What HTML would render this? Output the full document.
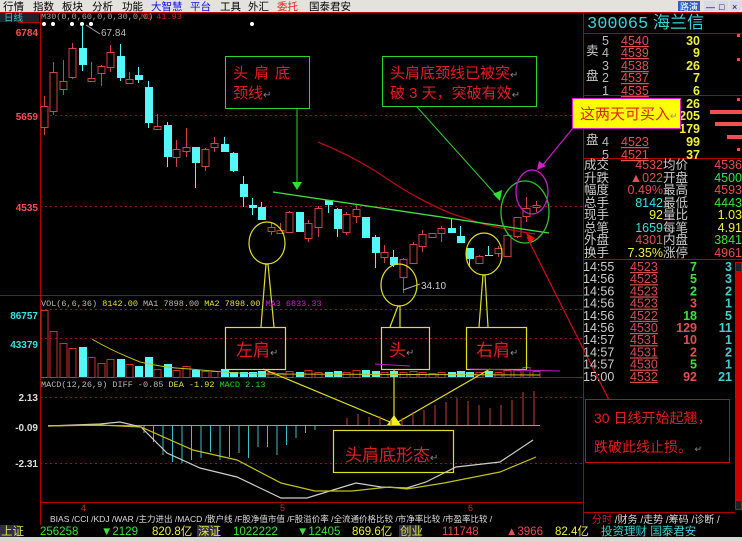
<!DOCTYPE html>
<html><head><meta charset="utf-8">
<style>
html,body{margin:0;padding:0;background:#000;width:742px;height:541px;overflow:hidden}
svg{display:block}
text{font-family:"Liberation Sans","WenQuanYi Zen Hei","Noto Sans CJK SC",sans-serif}
.m{font-family:"Liberation Mono","WenQuanYi Zen Hei",monospace}
</style></head><body>
<svg id="s" width="742" height="541" viewBox="0 0 742 541" xmlns="http://www.w3.org/2000/svg">
<rect width="742" height="541" fill="#000"/>
<rect x="0" y="0" width="742" height="12" fill="#e4e2dc"/>
<g font-size="10.5" fill="#000">
<text x="3" y="10">行情</text><text x="33" y="10">指数</text><text x="62" y="10">板块</text><text x="92" y="10">分析</text><text x="122" y="10">功能</text>
<text x="151" y="10" fill="#1010e0">大智慧</text><text x="190" y="10" fill="#1010e0">平台</text><text x="220" y="10">工具</text><text x="248" y="10">外汇</text>
<text x="277" y="10" fill="#e02020">委托</text><text x="309" y="10">国泰君安</text>
</g>
<rect x="678" y="1" width="22" height="10" fill="#3060c0"/><text x="680" y="10" font-size="9" fill="#fff">路演</text>
<rect x="704" y="1" width="11" height="10" fill="#d8d8e8"/><rect x="717" y="1" width="11" height="10" fill="#d8d8e8"/><rect x="730" y="1" width="11" height="10" fill="#d8d8e8"/>
<text x="706" y="10" font-size="9" fill="#003">—</text><text x="719" y="10" font-size="9" fill="#003">□</text><text x="732" y="10" font-size="9" fill="#003">×</text>
<rect x="0" y="12" width="742" height="1" fill="#c00"/>
<rect x="0" y="13" width="39" height="9" fill="#202030"/>
<text x="4" y="21" font-size="9.5" fill="#40c0c0">日线</text>
<text x="41" y="19" font-size="8.5" fill="#aaa" class="m">M30(0,0,60,0,0,30,0,0)</text>
<text x="141" y="19" font-size="8.5" fill="#e02020" class="m">M6 41.93</text>
<g fill="#fff"><circle cx="44" cy="24" r="2"/><circle cx="53" cy="24" r="2"/><circle cx="72" cy="24" r="2"/><circle cx="82" cy="24" r="2"/><circle cx="91" cy="24" r="2"/><circle cx="252" cy="24" r="2"/></g>
<g stroke="#b00000" stroke-width="1">
<line x1="40.5" y1="13" x2="40.5" y2="525"/>
<line x1="583.5" y1="13" x2="583.5" y2="525"/>
<line x1="0" y1="295.5" x2="583" y2="295.5"/>
<line x1="40" y1="377.5" x2="583" y2="377.5"/>
<line x1="40" y1="502.5" x2="583" y2="502.5"/>
<line x1="18" y1="22.5" x2="40" y2="22.5"/>
</g>
<g stroke="#8a1a1a" stroke-dasharray="2,3">
<line x1="40" y1="115.5" x2="583" y2="115.5"/><line x1="40" y1="206.5" x2="583" y2="206.5"/>
<line x1="40" y1="309.5" x2="583" y2="309.5"/><line x1="40" y1="338.5" x2="583" y2="338.5"/>
<line x1="40" y1="397.5" x2="583" y2="397.5"/><line x1="40" y1="463.5" x2="583" y2="463.5"/>
</g>
<g font-size="10" font-weight="bold" text-anchor="end" class="m">
<text x="38" y="36" fill="#ff5050">6784</text>
<text x="38" y="120" fill="#ff5050">5659</text>
<text x="38" y="211" fill="#ff5050">4535</text>
<text x="38" y="319" fill="#40e0e0">86757</text>
<text x="38" y="348" fill="#40e0e0">43379</text>
<text x="38" y="401" fill="#ddd">2.13</text>
<text x="38" y="431" fill="#ddd">-0.09</text>
<text x="38" y="467" fill="#ddd">-2.31</text>
</g>
<line x1="86" y1="25" x2="100" y2="34" stroke="#aaa"/>
<text x="101" y="36" font-size="10" fill="#bbb">67.84</text>
<g id="candles"></g>
<path d="M318 142 Q350 155 377 172 Q400 188 417 197 Q435 207 450 213 Q470 220 487 225 Q510 230 535 234" stroke="#b01010" stroke-width="1.3" fill="none"/>
<line x1="273" y1="192" x2="549" y2="233" stroke="#40e040" stroke-width="1.3"/>
<line x1="403" y1="290" x2="420" y2="284" stroke="#aaa"/>
<text x="421" y="289" font-size="10" fill="#ccc">34.10</text>
<rect x="225.5" y="56.5" width="84" height="52" fill="none" stroke="#30d030"/>
<text x="233" y="78" font-size="15" fill="#e02020" letter-spacing="6">头肩底</text>
<text x="233" y="98" font-size="15" fill="#e02020">颈线<tspan fill="#888" font-size="10">↵</tspan></text>
<line x1="297" y1="108" x2="297" y2="182" stroke="#30d030"/>
<polygon points="292,182 302,182 297,190" fill="#30e030"/>
<rect x="382.5" y="56.5" width="154" height="50" fill="none" stroke="#30d030"/>
<text x="390" y="78" font-size="15" fill="#e02020">头肩底颈线已被突<tspan fill="#888" font-size="10">↵</tspan></text>
<text x="390" y="98" font-size="15" fill="#e02020">破 3 天，突破有效<tspan fill="#888" font-size="10">↵</tspan></text>
<line x1="417" y1="107" x2="497" y2="196" stroke="#30d030"/>
<polygon points="493,194 500,201 502,190" fill="#30e030"/>
<ellipse cx="525" cy="212" rx="24" ry="31" fill="none" stroke="#30c030" stroke-width="1.3"/>
<ellipse cx="532" cy="192" rx="16" ry="22" fill="none" stroke="#c020c0" stroke-width="1.3"/>
<line x1="573" y1="128" x2="542" y2="166" stroke="#c020c0" stroke-width="1.3"/>
<polygon points="537,170 539,161 546,166" fill="#d020d0"/>
<line x1="527" y1="237" x2="609" y2="400" stroke="#d01010" stroke-width="1.2"/>
<polygon points="526,233 530,243 535,238" fill="#f01010"/>
<g stroke="#e0e020" fill="none" stroke-width="1.2">
<ellipse cx="267" cy="243" rx="18" ry="21"/>
<ellipse cx="399" cy="285" rx="18" ry="21"/>
<ellipse cx="484" cy="254" rx="18" ry="21"/>
<polyline points="261,327 266,264 268,264 274,327"/>
<polyline points="390,327 398,306 400,306 400,327"/>
<polyline points="479,327 483,275 485,275 488,327"/>
<line x1="263" y1="369" x2="390" y2="422"/>
<line x1="394" y1="369" x2="394" y2="422"/>
<line x1="490" y1="369" x2="398" y2="422"/>
<rect x="225.5" y="327.5" width="60" height="42"/>
<rect x="381.5" y="327.5" width="48" height="42"/>
<rect x="466.5" y="327.5" width="60" height="42"/>
<rect x="333.5" y="430.5" width="120" height="42"/>
</g>
<polygon points="387,425 401,425 394,415" fill="#f0f020"/>
<g font-size="17" fill="#e02020">
<text x="236" y="356">左肩<tspan fill="#888" font-size="10">↵</tspan></text>
<text x="389" y="356">头<tspan fill="#888" font-size="10">↵</tspan></text>
<text x="476" y="356">右肩<tspan fill="#888" font-size="10">↵</tspan></text>
<text x="345" y="461">头肩底形态<tspan fill="#888" font-size="10">↵</tspan></text>
</g>
<text x="41" y="306" font-size="8.5" class="m" fill="#bbb">VOL(6,6,36) <tspan fill="#e0e040">8142.00</tspan> MA1 7898.00 <tspan fill="#e0e040">MA2 7898.00</tspan> <tspan fill="#d020d0">MA3 6833.33</tspan></text>
<text x="41" y="387" font-size="8.5" class="m" fill="#bbb">MACD(12,26,9) DIFF -0.85 <tspan fill="#e0e040">DEA -1.92</tspan> <tspan fill="#30d030">MACD 2.13</tspan></text>
<path d="M92 339 Q110 350 140 362 Q165 368 190 369 Q230 373 260 374 L540 375" stroke="#c0c020" fill="none"/>
<path d="M375 364 L410 366 M470 369 L560 371" stroke="#c020c0" fill="none"/>
<line x1="48" y1="425.5" x2="540" y2="425.5" stroke="#40c0c0"/>
<g id="macd"></g>
<path d="M48 426 L100 424 L120 422 L141 427 L167 453 L200 468 L237 477 L281 498 L307 498 L333 490 L356 483 L381 487 L407 488 L426 482 L456 467 L500 462 L533 440" stroke="#ccc" fill="none" stroke-width="1.2"/>
<path d="M48 426 L100 425 L141 427 L193 450 L237 460 L281 483 L315 491 L352 491 L389 487 L407 489 L444 483 L500 472 L536 457" stroke="#c0c020" fill="none" stroke-width="1.2"/>
<g font-size="9" fill="#c03030"><text x="81" y="511">4</text><text x="280" y="511">5</text><text x="468" y="511">6</text></g>
<text x="50" y="522" font-size="8.5" fill="#ddd">BIAS /CCI /KDJ /WAR /主力进出 /MACD /散户线 /F股净值市值 /F股溢价率 /全流通价格比较 /市净率比较 /市盈率比较 /</text>
<text x="587" y="28" font-size="17" fill="#40d0d0" class="m">300065<tspan font-family="WenQuanYi Zen Hei,sans-serif"> 海兰信</tspan></text>
<g stroke="#b00000"><line x1="583" y1="33.5" x2="742" y2="33.5"/><line x1="583" y1="95.5" x2="742" y2="95.5"/><line x1="583" y1="158.5" x2="742" y2="158.5"/><line x1="583" y1="259.5" x2="742" y2="259.5"/></g>
<g font-size="12.5" class="m" font-weight="bold">
<text x="586" y="55" fill="#ccc" font-family="WenQuanYi Zen Hei,sans-serif" font-weight="normal">卖</text><text x="586" y="80" fill="#ccc" font-family="WenQuanYi Zen Hei,sans-serif" font-weight="normal">盘</text>
<text x="586" y="144" fill="#ccc" font-family="WenQuanYi Zen Hei,sans-serif" font-weight="normal">盘</text>
<g fill="#bbb" font-weight="normal"><text x="602" y="45">5</text><text x="602" y="57">4</text><text x="602" y="70">3</text><text x="602" y="82">2</text><text x="602" y="95">1</text><text x="602" y="146">4</text><text x="602" y="159">5</text></g>
<g fill="#e05050" text-decoration="underline" font-weight="normal"><text x="621" y="45">4540</text><text x="621" y="57">4539</text><text x="621" y="70">4538</text><text x="621" y="82">4537</text><text x="621" y="95">4535</text><text x="621" y="146">4523</text><text x="621" y="159">4521</text></g>
<g fill="#f0f040" text-anchor="end"><text x="700" y="45">30</text><text x="700" y="57">9</text><text x="700" y="70">26</text><text x="700" y="82">7</text><text x="700" y="95">6</text><text x="700" y="108">26</text><text x="700" y="120">205</text><text x="700" y="133">179</text><text x="700" y="146">99</text><text x="700" y="159">37</text></g>
</g>
<g fill="#f05050"><rect x="737" y="34" width="3" height="3"/><rect x="737" y="58" width="3" height="3"/><rect x="737" y="98" width="3" height="3"/><rect x="710" y="110" width="32" height="4"/><rect x="715" y="122" width="27" height="4"/><rect x="727" y="135" width="15" height="4"/><rect x="737" y="148" width="3" height="3"/></g>
<rect x="572.5" y="98.5" width="108" height="30" fill="#ffff00" stroke="#d020d0"/>
<text x="580" y="119" font-size="15" fill="#e02020">这两天可买入<tspan fill="#888" font-size="9">↵</tspan></text>
<g font-size="12.5">
<g fill="#ccc"><text x="584" y="169">成交</text><text x="584" y="182">升跌</text><text x="584" y="194">幅度</text><text x="584" y="207">总手</text><text x="584" y="219">现手</text><text x="584" y="232">总笔</text><text x="584" y="244">外盘</text><text x="584" y="257">换手</text>
<text x="663" y="169">均价</text><text x="663" y="182">开盘</text><text x="663" y="194">最高</text><text x="663" y="207">最低</text><text x="663" y="219">量比</text><text x="663" y="232">每笔</text><text x="663" y="244">内盘</text><text x="663" y="257">涨停</text></g>
<g text-anchor="end" class="m">
<text x="663" y="169" fill="#e05050">4532</text><text x="663" y="182" fill="#e05050">▲022</text><text x="663" y="194" fill="#e05050">0.49%</text><text x="663" y="207" fill="#40e0e0">8142</text><text x="663" y="219" fill="#f0f040">92</text><text x="663" y="232" fill="#40e0e0">1659</text><text x="663" y="244" fill="#e05050">4301</text><text x="663" y="257" fill="#f0f040">7.35%</text>
<text x="742" y="169" fill="#e05050">4536</text><text x="742" y="182" fill="#40e040">4500</text><text x="742" y="194" fill="#e05050">4593</text><text x="742" y="207" fill="#40e040">4443</text><text x="742" y="219" fill="#f0f040">1.03</text><text x="742" y="232" fill="#f0f040">4.91</text><text x="742" y="244" fill="#40e040">3841</text><text x="742" y="257" fill="#e05050">4961</text>
</g></g>
<g id="ticks" font-size="12.5" class="m"></g>
<rect x="735" y="262" width="7" height="248" fill="#d00000"/>
<rect x="736" y="263" width="5" height="8" fill="#222"/><rect x="736" y="501" width="5" height="8" fill="#222"/>
<rect x="585.5" y="399.5" width="144" height="63" fill="none" stroke="#c01010"/>
<text x="594" y="423" font-size="14" fill="#e02020">30 日线开始起翘，</text>
<text x="594" y="452" font-size="14" fill="#e02020">跌破此线止损。<tspan fill="#888" font-size="9"> ↵</tspan></text>
<line x1="583" y1="512.5" x2="735" y2="512.5" stroke="#b00000"/>
<text x="592" y="523" font-size="10" fill="#ddd"><tspan fill="#d02020">分时</tspan> /财务 /走势 /筹码 /诊断 /</text>
<rect x="0" y="525" width="742" height="12" fill="#000"/>
<rect x="0" y="537" width="742" height="4" fill="#d8d8d0"/>
<g font-size="11.5" class="m">
<rect x="0" y="525" width="20" height="12" fill="#303040"/><text x="1" y="535" fill="#e0e040" font-family="WenQuanYi Zen Hei,sans-serif">上证</text>
<text x="40" y="535" fill="#40e040">256258</text><text x="101" y="535" fill="#40e040">▼2129</text><text x="152" y="535" fill="#f0f040">820.8<tspan font-family="WenQuanYi Zen Hei,sans-serif">亿</tspan></text>
<rect x="197" y="525" width="22" height="12" fill="#303040"/><text x="198" y="535" fill="#e0e040" font-family="WenQuanYi Zen Hei,sans-serif">深证</text>
<text x="233" y="535" fill="#40e040">1022222</text><text x="297" y="535" fill="#40e040">▼12405</text><text x="352" y="535" fill="#f0f040">869.6<tspan font-family="WenQuanYi Zen Hei,sans-serif">亿</tspan></text>
<rect x="399" y="525" width="22" height="12" fill="#303040"/><text x="400" y="535" fill="#e0e040" font-family="WenQuanYi Zen Hei,sans-serif">创业</text>
<text x="442" y="535" fill="#e05050">111748</text><text x="506" y="535" fill="#e05050">▲3966</text><text x="555" y="535" fill="#f0f040">82.4<tspan font-family="WenQuanYi Zen Hei,sans-serif">亿</tspan></text>
<text x="601" y="535" fill="#40d0d0" font-family="WenQuanYi Zen Hei,sans-serif">投资理财 国泰君安</text>
</g>
</svg>
<script>
var NS="http://www.w3.org/2000/svg";
function el(p,t,a){var e=document.createElementNS(NS,t);for(var k in a)e.setAttribute(k,a[k]);p.appendChild(e);return e;}
var C=[[44,106,127,96,135,'r'],[53,72,111,62,115,'r'],[63,81,89,60,95,'r'],[72,48,77,43,79,'r'],[82,48,65,25,71,'c'],[91,78,81,62,82,'r'],[101,66,73,65,86,'r'],[110,52,67,45,72,'r'],[120,56,78,44,81,'c'],[129,79,83,72,84,'r'],[138,75,80,67,83,'c'],[148,87,123,81,128,'c'],[157,126,129,114,130,'r'],[167,125,157,122,167,'c'],[176,149,157,140,167,'r'],[186,147,151,128,157,'r'],[195,147,163,147,188,'c'],[205,149,166,148,171,'r'],[214,143,147,137,152,'r'],[224,144,152,137,152,'c'],[233,153,171,152,172,'c'],[243,184,197,176,207,'c'],[252,205,208,198,215,'c'],[261,207,220,202,220,'c'],[271,227,231,222,235,'r'],[280,230,233,223,234,'r'],[289,212,232,211,233,'r'],[299,212,232,212,232,'c'],[308,223,238,220,242,'r'],[318,208,227,206,237,'r'],[328,200,205,200,213,'c'],[337,209,229,208,237,'c'],[346,214,232,212,235,'r'],[356,209,216,205,223,'r'],[365,217,238,217,238,'c'],[375,237,253,235,268,'c'],[384,252,257,245,263,'r'],[393,257,265,250,267,'c'],[403,259,277,258,293,'r'],[413,244,263,242,263,'r'],[422,234,246,230,252,'r'],[432,233,237,233,237,'r'],[441,228,233,226,242,'r'],[451,228,233,218,233,'c'],[460,236,243,226,243,'c'],[469,248,259,248,267,'c'],[479,256,263,255,264,'r'],[488,255,256,246,256,'c'],[498,248,253,246,257,'r'],[507,235,256,234,256,'r'],[517,217,236,217,238,'r'],[526,208,216,197,222,'r'],[536,205,207,201,212,'r']];
var V=[310,331,343,348,347,357,363,359,359,364,366,357,369,364,370,366,370,371,371,369,372,372,372,371,372,373,371,372,370,372,372,371,372,370,370,371,372,371,372,371,372,373,372,372,371,372,372,371,372,370,370,367,371];
var g=document.getElementById('candles');
C.forEach(function(c,i){var col=c[5]=='r'?'#cc4444':'#54f8f8';
el(g,'line',{x1:c[0]+.5,y1:c[3],x2:c[0]+.5,y2:c[4],stroke:col});
if(c[5]=='r')el(g,'rect',{x:c[0]-3,y:c[1]+.5,width:7,height:Math.max(1,c[2]-c[1]),fill:'#000',stroke:col});
else el(g,'rect',{x:c[0]-3,y:c[1],width:8,height:Math.max(1,c[2]-c[1]),fill:col});
var v=V[i];
if(c[5]=='r')el(g,'rect',{x:c[0]-3,y:v+.5,width:7,height:377-v,fill:'none',stroke:'#cc3030'});
else el(g,'rect',{x:c[0]-3,y:v,width:8,height:377-v,fill:'#54f8f8'});
});
var m=document.getElementById('macd');
var neg=[433,442,455,462,463,460,458,452,460,457,453,458,447,447,455,445,438,433,430];
neg.forEach(function(y,i){var x=144+i*9.5;el(m,'line',{x1:x,y1:426,x2:x,y2:y,stroke:'#40c0c0'});});
var pos=[418,414,417,416,420,418,412,410,405,402,398,401,405,408,405,400,392,391];
pos.forEach(function(y,i){var x=347+i*11;el(m,'line',{x1:x,y1:425,x2:x,y2:y,stroke:'#c04040'});});
var T=[['14:55','4523','7','g','3'],['14:56','4523','5','g','3'],['14:56','4523','2','g','2'],['14:56','4523','3','r','1'],['14:56','4522','18','g','5'],['14:56','4530','129','r','11'],['14:57','4531','10','r','1'],['14:57','4531','2','r','2'],['14:57','4530','5','g','1'],['15:00','4532','92','r','21']];
var tg=document.getElementById('ticks');
T.forEach(function(t,i){var y=271+i*12.2;
var a=el(tg,'text',{x:583,y:y,fill:'#ccc'});a.textContent=t[0];
a=el(tg,'text',{x:630,y:y,fill:'#d05050','text-decoration':'underline'});a.textContent=t[1];
a=el(tg,'text',{x:697,y:y,fill:t[3]=='g'?'#40e040':'#e05050','text-anchor':'end','font-weight':'bold'});a.textContent=t[2];
a=el(tg,'text',{x:732,y:y,fill:'#40d0d0','text-anchor':'end','font-weight':'bold'});a.textContent=t[4];});
</script>
</body></html>
